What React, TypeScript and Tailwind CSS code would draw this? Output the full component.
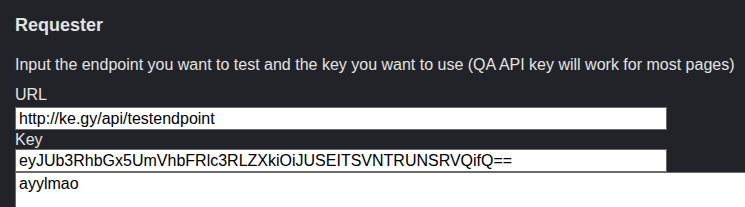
export default function App() {
  return (
    <div className="h-[207px] w-[745px] overflow-hidden bg-[#222328] pl-[15px] pt-[14px] text-[#e3e3e3]" style={{ fontFamily: '"Liberation Sans", Arial, sans-serif' }}>
      <h1 className="text-[18px] font-bold leading-[22px]">Requester</h1>
      <p className="mt-[20px] whitespace-nowrap text-[16px] leading-[18px]">Input the endpoint you want to test and the key you want to use (QA API key will work for most pages)</p>
      <div className="mt-[12px] text-[16px] leading-[18px]">URL</div>
      <input
        className="mt-[3px] box-border block h-[23px] w-[652px] border border-[#6b6b6b] bg-white px-[3px] text-[16px] text-black outline-none"
        defaultValue="http://ke.gy/api/testendpoint"
      />
      <div className="text-[16px] leading-[19px]">Key</div>
      <input
        className="box-border block h-[23px] w-[652px] border border-[#6b6b6b] bg-white px-[3px] text-[16px] text-black outline-none"
        defaultValue="eyJUb3RhbGx5UmVhbFRlc3RLZXkiOiJUSEITSVNTRUNSRVQifQ=="
      />
      <textarea
        className="box-border block h-[60px] w-[740px] resize-none border border-[#6b6b6b] bg-white px-[3px] py-[2px] text-[16px] leading-[18px] text-black outline-none"
        defaultValue="ayylmao"
      />
    </div>
  );
}
